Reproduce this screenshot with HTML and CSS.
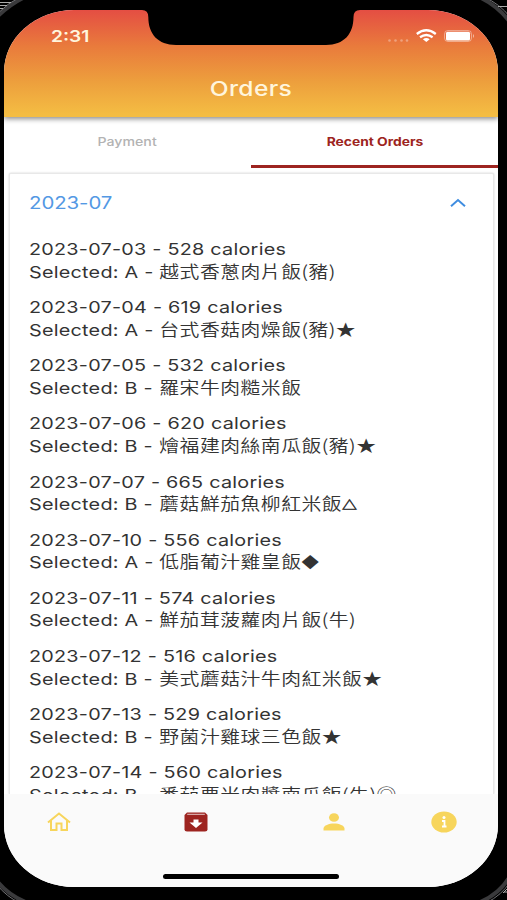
FILE: index.html
```html
<!DOCTYPE html>
<html lang="zh-Hant">
<head>
<meta charset="utf-8">
<title>Orders</title>
<link rel="stylesheet" href="styles.css">
</head>
<body>
<svg class="bezel" viewBox="0 0 507 900" aria-hidden="true">
  <g fill="none">
    <path d="M-3 17Q10 4 25-3M479-3Q497 5 510 22M-3 881Q9 896 28 903M478 903Q500 894 510 876" stroke="#3a3a3c" stroke-width="4"/>
    <path d="M-3 14Q8 3 20-3M484-3Q500 4 510 17M-3 885Q7 897 20 903M486 903Q502 895 510 882" stroke="#737376" stroke-width="1"/>
    <path d="M0 2.500H11M0 5.500H7M0 8.500H3M498 6.500H507M503 893L507 889M504 892H507" stroke="#aaa" stroke-width="1"/>
  </g>
</svg>
<main class="screen">
  <header class="top">
    <div class="status">
      <span class="time">2:31</span>
      <svg class="signals" viewBox="0 0 90 18" aria-hidden="true">
        <g fill="#fff" opacity=".33"><circle cx="3.500" cy="13.500" r="1.300"/><circle cx="9.500" cy="13.500" r="1.300"/><circle cx="15.500" cy="13.500" r="1.300"/><circle cx="21" cy="13.500" r="1.300"/></g>
        <g fill="none" stroke="#fff" stroke-width="2.300"><path d="M30.800 7Q40.300-.500 49.800 7"/><path d="M34 10.300Q40.300 5.700 46.600 10.300"/></g>
        <path d="M36.900 12.200Q40.300 9.900 43.700 12.200L40.300 15Z" fill="#fff"/>
        <rect x="58.500" y="3.500" width="27" height="11" rx="3.500" fill="none" stroke="#fff" stroke-opacity=".4"/>
        <rect x="60" y="4.800" width="24" height="8.600" rx="1.500" fill="#fff"/>
        <path d="M87 7q2 2 0 4z" fill="#fff" opacity=".55"/>
      </svg>
    </div>
    <h1>Orders</h1>
    <svg class="notch" viewBox="0 0 218 46" aria-hidden="true"><path d="M0 0V10Q6.300 10 6.300 17C6.300 34 16 45 34 45H184C202 45 211.500 34 211.500 17Q211.500 10 218 10V0Z"/></svg>
  </header>
  <nav class="tabs"><div class="tab"><span>Payment</span></div><div class="tab active"><span>Recent Orders</span></div></nav>
  <section class="card">
    <div class="month"><h2>2023-07</h2><svg viewBox="0 0 16 10" aria-hidden="true"><path d="M1 8.200L8 2L15 8.200"/></svg></div>
    <ul class="orders">
      <li><p class="date">2023-07-03 - 528 calories</p><p><span class="pick">Selected: A -</span><span class="dish">越式香蔥肉片飯(豬)</span></p></li>
      <li><p class="date">2023-07-04 - 619 calories</p><p><span class="pick">Selected: A -</span><span class="dish">台式香菇肉燥飯(豬)★</span></p></li>
      <li><p class="date">2023-07-05 - 532 calories</p><p><span class="pick">Selected: B -</span><span class="dish">羅宋牛肉糙米飯</span></p></li>
      <li><p class="date">2023-07-06 - 620 calories</p><p><span class="pick">Selected: B -</span><span class="dish">燴福建肉絲南瓜飯(豬)★</span></p></li>
      <li><p class="date">2023-07-07 - 665 calories</p><p><span class="pick">Selected: B -</span><span class="dish">蘑菇鮮茄魚柳紅米飯<span class="triangle">△</span></span></p></li>
      <li><p class="date">2023-07-10 - 556 calories</p><p><span class="pick">Selected: A -</span><span class="dish">低脂葡汁雞皇飯<span class="diamond">◆</span></span></p></li>
      <li><p class="date">2023-07-11 - 574 calories</p><p><span class="pick">Selected: A -</span><span class="dish">鮮茄茸菠蘿肉片飯(牛)</span></p></li>
      <li><p class="date">2023-07-12 - 516 calories</p><p><span class="pick">Selected: B -</span><span class="dish">美式蘑菇汁牛肉紅米飯★</span></p></li>
      <li><p class="date">2023-07-13 - 529 calories</p><p><span class="pick">Selected: B -</span><span class="dish">野菌汁雞球三色飯★</span></p></li>
      <li><p class="date">2023-07-14 - 560 calories</p><p><span class="pick">Selected: B -</span><span class="dish">番茄粟米肉醬南瓜飯(牛)◎</span></p></li>
    </ul>
  </section>
  <footer class="bottom">
    <nav class="icons">
      <svg viewBox="0 0 26 22"><path d="M2 11.500L13 2.500L24 11.500M5 9.500V19H10.500V12.500H15.500V19H21V9.500" fill="none" stroke="#f7d55c" stroke-width="2"/></svg>
      <svg viewBox="0 0 26 22"><path fill="#9d2420" d="M4 1.500H22L24.500 4V18.500Q24.500 20.500 22 20.500H4Q1.500 20.500 1.500 18.500V4Z"/><path d="M4.200 3.300H21.800" stroke="#e7c9c7" stroke-width="1"/><path fill="#fff" d="M10.500 8.500H15.500V11.500H19.500L13 17L6.500 11.500H10.500Z"/></svg>
      <svg viewBox="0 0 26 22"><g fill="#f7d55c"><ellipse cx="13" cy="6.500" rx="5" ry="4.300"/><path d="M2.500 19.500V17.500C2.500 14.500 8 12.500 13 12.500S23.500 14.500 23.500 17.500V19.500Z"/></g></svg>
      <svg viewBox="0 0 26 22"><ellipse cx="13" cy="11" rx="12.700" ry="10.600" fill="#f7d55c"/><circle cx="13" cy="6.600" r="1.500" fill="#fff"/><path d="M11 10H13.500V15M11 15.500H15.500" fill="none" stroke="#fff" stroke-width="1.800"/></svg>
    </nav>
    <div class="homebar"></div>
  </footer>
</main>
</body>
</html>
```
FILE: styles.css
```css
* { box-sizing: border-box; margin: 0; padding: 0; }
body { width: 507px; height: 900px; overflow: hidden; background: #000; font-family: Inter, "Noto Sans CJK TC", sans-serif; }
.bezel { position: absolute; left: 0; top: 0; width: 507px; height: 900px; }
.screen { position: relative; display: flex; flex-direction: column; width: 494px; height: 877px; margin: 10px 0 0 4px; overflow: hidden; background: #fff; border-radius: 70px / 62px; }
.top { position: relative; z-index: 2; flex: 0 0 107px; background: linear-gradient(#e44e43, #e97b3c 34%, #eda03d 68%, #f4bd43 98%); box-shadow: 0 2px 5px rgba(0,0,0,.45); color: #fff5dc; }
.status { display: flex; justify-content: space-between; padding: 17px 22px 0 47px; height: 57px; }
.time { font-size: 16px; font-weight: 600; line-height: 19px; transform: scaleX(1.2); transform-origin: left; }
.signals { width: 90px; height: 18px; }
h1 { font-size: 20.500px; font-weight: 500; line-height: 24px; text-align: center; letter-spacing: .3px; transform: scaleX(1.2); margin-top: 10px; }
.notch { position: absolute; left: 138px; top: -10px; width: 218px; height: 46px; }
.tabs { display: flex; flex: 0 0 51px; }
.tab { flex: 1; padding-top: 16px; text-align: center; font-size: 12px; line-height: 17px; color: #b3b3b3; border-bottom: 3px solid transparent; }
.tab span { display: inline-block; transform: scaleX(1.18); font-weight: 500; }
.active { color: #9d2420; border-color: #9d2420; }
.tab.active span { font-weight: 700; transform: scaleX(1.15); }
.card { flex: 1; min-height: 0; overflow: hidden; margin: 5px 4px 0 5px; padding: 0 20px 0 18.800px; background: #fff; border: 1px solid #e8e8e8; border-bottom: 0; box-shadow: 0 0 2px rgba(0,0,0,.22); border-radius: 2px 2px 0 0; }
.month { display: flex; align-items: center; justify-content: space-between; height: 58px; padding-right: 7px; }
h2 { color: #5398e4; font-size: 17px; font-weight: 400; letter-spacing: -.05px; transform: scaleX(1.2); transform-origin: left; }
.month svg { width: 16px; height: 10px; fill: none; stroke: #3f8de0; stroke-width: 2; }
.orders { list-style: none; padding-top: 6px; color: #333; font-size: 16.500px; line-height: 22px; }
li { height: 58.170px; transform: scaleX(1.2); transform-origin: left; white-space: nowrap; }
p { height: 21.500px; letter-spacing: .2px; }
.pick { display: inline-block; width: 108.600px; }
.dish { font-family: "Noto Sans CJK TC", sans-serif; font-size: 16.500px; font-weight: 350; letter-spacing: .420px; }
.triangle { font-size: 12.500px; font-weight: 700; -webkit-text-stroke: .5px #333; }
.diamond { font-size: 14.500px; }
.bottom { position: relative; z-index: 2; display: flex; flex-direction: column; justify-content: space-between; align-items: center; flex: 0 0 93px; background: #fafafa; padding: 17px 0 8px; }
.icons { display: flex; width: 411px; }
.icons svg { width: 26px; height: 22px; margin-right: 111.500px; flex: none; }
.icons svg:nth-child(3) { margin-right: 84px; }
.icons svg:last-child { margin-right: 0; }
.homebar { width: 176px; height: 5px; border-radius: 3px; background: #000; }
```
